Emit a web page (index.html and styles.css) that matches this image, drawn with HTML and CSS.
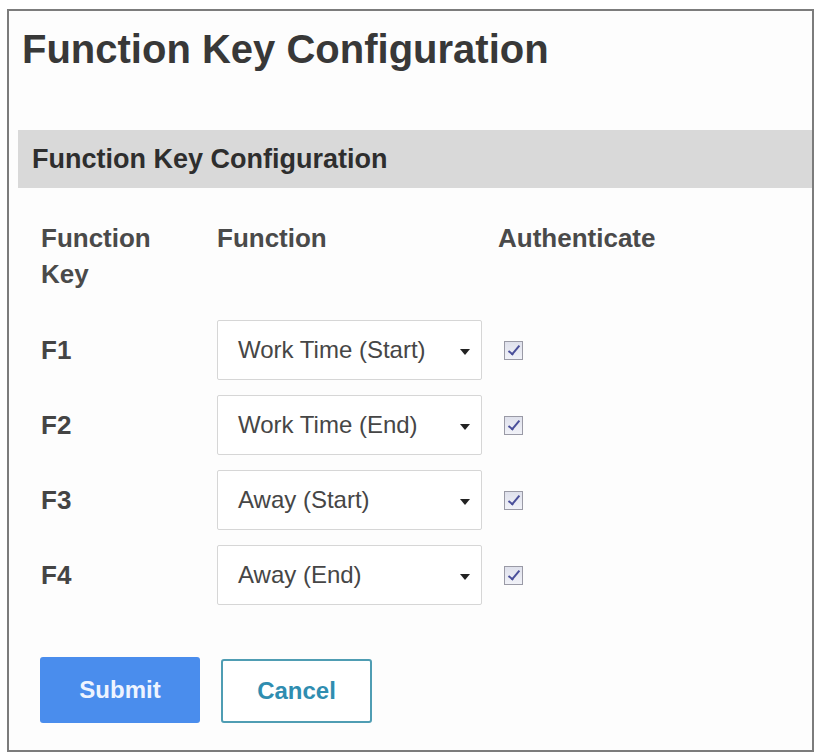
FILE: index.html
```html
<!DOCTYPE html>
<html lang="en">

<head>
    <meta charset="UTF-8">
    <meta name="viewport" content="width=device-width, initial-scale=1.0">
    <title>Function Key Configuration</title>
    <link rel="stylesheet" href="styles.css">
</head>

<body>
    <div class="panel">
        <h1 class="page-title">Function Key Configuration</h1>

        <div class="section-bar">Function Key Configuration</div>

        <div class="key-grid">
            <div class="col-head">Function<br>Key</div>
            <div class="col-head">Function</div>
            <div class="col-head">Authenticate</div>

            <div class="key-name">F1</div>
            <div class="select-box"><span>Work Time (Start)</span><span class="caret"></span></div>
            <div class="auth"><span class="check"></span></div>

            <div class="key-name">F2</div>
            <div class="select-box"><span>Work Time (End)</span><span class="caret"></span></div>
            <div class="auth"><span class="check"></span></div>

            <div class="key-name">F3</div>
            <div class="select-box"><span>Away (Start)</span><span class="caret"></span></div>
            <div class="auth"><span class="check"></span></div>

            <div class="key-name">F4</div>
            <div class="select-box"><span>Away (End)</span><span class="caret"></span></div>
            <div class="auth"><span class="check"></span></div>
        </div>

        <div class="actions">
            <button class="btn btn-submit">Submit</button>
            <button class="btn btn-cancel">Cancel</button>
        </div>
    </div>
</body>

</html>
```

FILE: styles.css
```css
body {
    margin: 0;
    background-color: #fff;
    font-family: "Liberation Sans", Arial, sans-serif;
    color: #444;
}

.panel {
    box-sizing: border-box;
    width: 807px;
    height: 743px;
    margin: 9px 0 0 7px;
    border: 2px solid #7c7c7c;
    background-color: #fdfdfd;
}

.page-title {
    margin: 15px 0 0 13px;
    font-size: 40px;
    line-height: 46px;
    font-weight: bold;
    color: #383838;
}

.section-bar {
    margin: 58px 0 0 9px;
    height: 58px;
    padding-left: 14px;
    background-color: #d9d9d9;
    font-size: 27px;
    font-weight: bold;
    line-height: 58px;
    color: #2e2e2e;
}

.key-grid {
    display: grid;
    grid-template-columns: 176px 281px 1fr;
    grid-template-rows: 85px repeat(4, 60px);
    row-gap: 15px;
    margin: 32px 0 0 32px;
}

.col-head {
    font-size: 26px;
    font-weight: bold;
    line-height: 36px;
    color: #4a4a4a;
}

.key-name {
    display: flex;
    align-items: center;
    font-size: 26px;
    font-weight: bold;
    color: #444;
}

.select-box {
    box-sizing: border-box;
    width: 265px;
    height: 60px;
    display: flex;
    align-items: center;
    justify-content: space-between;
    padding: 0 11px 0 20px;
    border: 1px solid #d6d6d6;
    border-radius: 2px;
    background-color: #fff;
    font-size: 24px;
    color: #464646;
}

.caret {
    width: 0;
    height: 0;
    margin-top: 4px;
    border-left: 5px solid transparent;
    border-right: 5px solid transparent;
    border-top: 6px solid #222;
}

.auth {
    display: flex;
    align-items: center;
    padding-left: 6px;
}

.check {
    position: relative;
    box-sizing: border-box;
    width: 19px;
    height: 19px;
    border: 1px solid #9a9aa6;
    background: linear-gradient(#dfe1ec, #f1f2f8);
}

/* tick mark drawn from two borders */
.check::after {
    content: "";
    position: absolute;
    left: 6px;
    top: 1px;
    width: 4px;
    height: 10px;
    border-right: 2px solid #4a4f9a;
    border-bottom: 2px solid #4a4f9a;
    transform: rotate(40deg);
}

.actions {
    display: flex;
    align-items: flex-end;
    gap: 21px;
    margin: 52px 0 0 31px;
}

.btn {
    box-sizing: border-box;
    font-family: "Liberation Sans", Arial, sans-serif;
    font-size: 24px;
    font-weight: bold;
    border-radius: 3px;
    cursor: pointer;
}

.btn-submit {
    width: 160px;
    height: 66px;
    border: none;
    background-color: #4a8ded;
    color: #eef4ff;
}

.btn-cancel {
    width: 151px;
    height: 64px;
    border: 2px solid #4f9db3;
    background-color: #fff;
    color: #2f8db0;
}
```
